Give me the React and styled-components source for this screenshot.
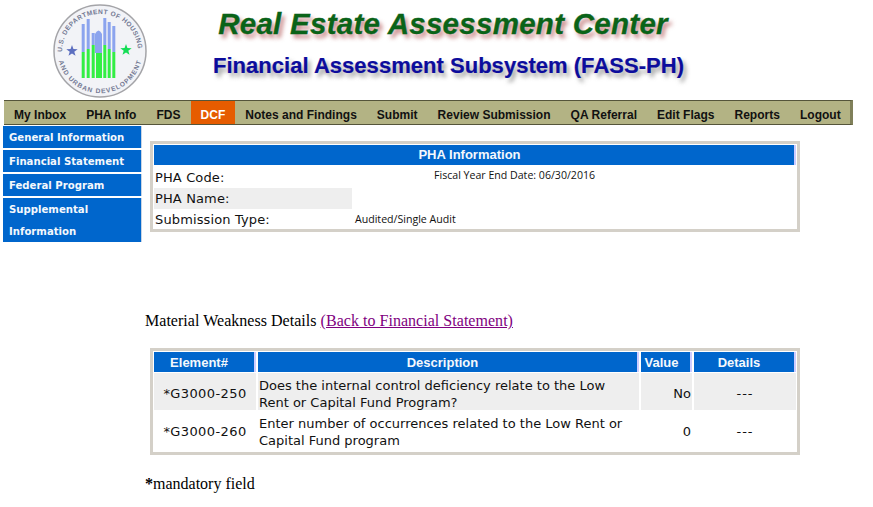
import styled, { createGlobalStyle } from 'styled-components';

const GlobalStyle = createGlobalStyle`
  html, body {
    margin: 0;
    padding: 0;
    background: #fff;
  }
  body {
    font-family: "Liberation Serif", serif;
    font-size: 16px;
    color: #000;
  }
`;

const Page = styled.div`
  width: 873px;
  height: 507px;
  overflow: hidden;
`;

const Header = styled.header`
  height: 100px;
  display: flex;
  padding-left: 52px;
  box-sizing: border-box;
`;

const Seal = styled.svg`
  width: 96px;
  height: 96px;
  margin-top: 3px;
  flex: none;
`;

const Titles = styled.div`
  display: flex;
  flex-direction: column;
  align-items: center;
  width: 590px;
  font-family: "Liberation Sans", Arial, sans-serif;
  font-weight: bold;
`;

const MainTitle = styled.div`
  font-size: 29.5px;
  font-style: italic;
  line-height: 34px;
  margin-top: 7px;
  color: #0a6318;
  -webkit-text-stroke: 0.3px #0a6318;
  text-shadow: 3px 4px 4px rgba(170, 70, 70, 0.65);
  letter-spacing: 0.28px;
`;

const SubTitle = styled.div`
  font-size: 22px;
  line-height: 26px;
  margin: 12px 0 0 11px;
  color: #0c0c9c;
  -webkit-text-stroke: 0.2px #0c0c9c;
  text-shadow: 3px 4px 4px rgba(90, 90, 90, 0.6);
  letter-spacing: 0.03px;
`;

const Nav = styled.nav`
  margin-left: 4px;
  width: 849px;
  height: 25px;
  box-sizing: border-box;
  display: flex;
  background: #b3b384;
  border-top: 1px solid #55553a;
  border-bottom: 1px solid #55553a;
  border-right: 3px solid #80805a;
`;

const NavItem = styled.a`
  padding: 4px 10px 0;
  font: bold 12px/20px "Liberation Sans", Arial, sans-serif;
  letter-spacing: 0.015px;
  color: ${(p) => (p.$active ? '#fff' : '#111')};
  background: ${(p) => (p.$active ? '#e65c00' : 'transparent')};
  white-space: nowrap;
`;

const Body = styled.div`
  display: flex;
  align-items: flex-start;
`;

const Sidebar = styled.aside`
  width: 139px;
  margin: 1px 0 0 3px;
  display: flex;
  flex-direction: column;
  gap: 2px;
  flex: none;
`;

const SideItem = styled.a`
  height: ${(p) => (p.$lines || 1) * 22}px;
  padding: 1px 6px 0;
  background: #0066cc;
  color: #f4f8fc;
  font: bold 10.15px/22px "DejaVu Sans", Verdana, sans-serif;
  border-right: 1px solid #c8d4e4;
  box-sizing: border-box;
`;

const Content = styled.main`
  margin-left: 8px;
  flex: 1;
`;

const Panel = styled.section`
  width: 650px;
  box-sizing: border-box;
  border: 3px solid #d4d0c8;
  margin-top: ${(p) => p.$top}px;
  padding: 1px 1px 0;
`;

const BarTitle = styled.div`
  width: 640px;
  height: 20px;
  background: #0066cc;
  border-right: 2px solid #ccccff;
  color: #f4f8fc;
  text-indent: -9px;
  text-align: center;
  font: bold 13px/20px "Liberation Sans", Arial, sans-serif;
`;

const InfoGrid = styled.div`
  display: grid;
  grid-template-columns: 198px 80px 1fr;
  grid-template-rows: 21px 21px 20px;
  margin-top: 2px;
  font: 13px/21px "DejaVu Sans", Verdana, sans-serif;
  color: #111;
`;

const InfoLabel = styled.div`
  padding-left: 1px;
  letter-spacing: 0.13px;
  background: ${(p) => (p.$shade ? '#eeeeee' : 'transparent')};
`;

const SmallValue = styled.div`
  font: 10.6px/${(p) => p.$lh || 21}px "Open Sans", sans-serif;
  color: #111;
  white-space: nowrap;
  padding-left: ${(p) => p.$indent || 0}px;
  grid-column: ${(p) => p.$col || 'auto'};
`;

const Heading = styled.p`
  margin: 80px 0 0 -5px;
  line-height: 18px;
  font-size: 16px;
  letter-spacing: 0.03px;
`;

const BackLink = styled.a`
  color: #800080;
  text-decoration: underline;
`;

const DataGrid = styled.div`
  display: grid;
  grid-template-columns: 102px 381px 51px 102px;
  column-gap: 2px;
`;

const HeadCell = styled.div`
  height: 20px;
  margin-bottom: 1px;
  padding-right: ${(p) => p.$pad || 10}px;
  background: #0066cc;
  border-right: 2px solid #ccccff;
  color: #f4f8fc;
  font: bold 13px/22px "Liberation Sans", Arial, sans-serif;
  text-align: center;
`;

const Cell = styled.div`
  background: ${(p) => (p.$shade ? '#eeeeee' : 'transparent')};
  font: 13px/17px "DejaVu Sans", Verdana, sans-serif;
  color: #111;
  text-align: ${(p) => p.$align || 'left'};
  letter-spacing: ${(p) => p.$spacing || 0}px;
  padding: ${(p) => (p.$wrap ? '4px 2px 0 1px' : '12px 1px 0')};
  height: ${(p) => (p.$shade ? 37 : 41)}px;
  box-sizing: border-box;
  margin-bottom: ${(p) => (p.$shade ? 1 : 0)}px;
`;

const Note = styled.p`
  margin: 20px 0 0 -5px;
  line-height: 18px;
  font-size: 16px;
`;

const navItems = ['My Inbox', 'PHA Info', 'FDS', 'DCF', 'Notes and Findings', 'Submit', 'Review Submission', 'QA Referral', 'Edit Flags', 'Reports', 'Logout'];
const sideItems = ['General Information', 'Financial Statement', 'Federal Program'];

const rows = [
  { code: '*G3000-250', text: 'Does the internal control deficiency relate to the Low Rent or Capital Fund Program?', value: 'No', shade: true },
  { code: '*G3000-260', text: 'Enter number of occurrences related to the Low Rent or Capital Fund program', value: '0', shade: false },
];

// x, top of the blue part, top of the green part
const sealBars = [
  [29.7, 21, 49],
  [34.7, 16, 46],
  [39.7, 30, 42],
  [44, 40, 50],
  [47, 40, 50],
  [51.3, 15, 42],
  [55.7, 19, 46],
  [60.3, 23, 49],
];

function starPoints(cx, cy, r) {
  const points = [];
  for (let i = 0; i < 10; i++) {
    const radius = i % 2 === 0 ? r : r * 0.4;
    const angle = (Math.PI / 5) * i - Math.PI / 2;
    points.push(`${cx + radius * Math.cos(angle)},${cy + radius * Math.sin(angle)}`);
  }
  return points.join(' ');
}

function HudSeal() {
  return (
    <Seal viewBox="0 0 96 96">
      <defs>
        <path id="sealTop" d="M 10 49 A 38 38 0 0 1 86 49" />
        <path id="sealBottom" d="M 6.4 56 A 42.4 42.4 0 0 0 89.6 56" />
      </defs>
      <circle cx="48" cy="48" r="46" fill="#f2f3f7" stroke="#a4a4a8" strokeWidth="1.5" />
      <text fontFamily="Liberation Sans" fontSize="6.6" fontWeight="bold" fill="#747a94">
        <textPath href="#sealTop" textLength="116">U.S. DEPARTMENT OF HOUSING</textPath>
      </text>
      <text fontFamily="Liberation Sans" fontSize="6.6" fontWeight="bold" fill="#747a94">
        <textPath href="#sealBottom" textLength="112" startOffset="2">AND URBAN DEVELOPMENT</textPath>
      </text>
      {sealBars.map(([x, blue, green]) => (
        <g key={x}>
          <rect x={x} y={blue} width="3" height={green - blue} fill="#8ca4ee" />
          <rect x={x} y={green} width="3" height={75 - green} fill="#33ee44" />
        </g>
      ))}
      <path d="M43 50 V31 Q46.500 24 50 31 V50 Z" fill="#8ca4ee" />
      <polygon points={starPoints(20, 48, 6)} fill="#5d6fc0" />
      <polygon points={starPoints(74, 47, 6)} fill="#14dd55" />
    </Seal>
  );
}

export default function App() {
  return (
    <Page>
      <GlobalStyle />
      <Header>
        <HudSeal />
        <Titles>
          <MainTitle>Real Estate Assessment Center</MainTitle>
          <SubTitle>Financial Assessment Subsystem (FASS-PH)</SubTitle>
        </Titles>
      </Header>
      <Nav>
        {navItems.map((item) => (
          <NavItem key={item} $active={item === 'DCF'}>{item}</NavItem>
        ))}
      </Nav>
      <Body>
        <Sidebar>
          {sideItems.map((item) => (
            <SideItem key={item}>{item}</SideItem>
          ))}
          <SideItem $lines={2}>Supplemental Information</SideItem>
        </Sidebar>
        <Content>
          <Panel $top={16}>
            <BarTitle>PHA Information</BarTitle>
            <InfoGrid>
              <InfoLabel>PHA Code:</InfoLabel>
              <SmallValue $col="2 / 4" $indent={82} $lh={17}>Fiscal Year End Date: 06/30/2016</SmallValue>
              <InfoLabel $shade>PHA Name:</InfoLabel>
              <div />
              <div />
              <InfoLabel>Submission Type:</InfoLabel>
              <SmallValue $col="2 / 4" $indent={3}>Audited/Single Audit</SmallValue>
            </InfoGrid>
          </Panel>
          <Heading>
            Material Weakness Details <BackLink>(Back to Financial Statement)</BackLink>
          </Heading>
          <Panel $top={18}>
            <DataGrid>
              <HeadCell>Element#</HeadCell>
              <HeadCell>Description</HeadCell>
              <HeadCell $pad={8}>Value</HeadCell>
              <HeadCell>Details</HeadCell>
              {rows.map((row) => [
                <Cell key={row.code} $shade={row.shade} $align="center" $spacing={0.4}>{row.code}</Cell>,
                <Cell key={row.text} $shade={row.shade} $wrap>{row.text}</Cell>,
                <Cell key={row.value} $shade={row.shade} $align="right">{row.value}</Cell>,
                <Cell key={row.code + 'd'} $shade={row.shade} $align="center" $spacing={1}>---</Cell>,
              ])}
            </DataGrid>
          </Panel>
          <Note><b>*</b>mandatory field</Note>
        </Content>
      </Body>
    </Page>
  );
}
